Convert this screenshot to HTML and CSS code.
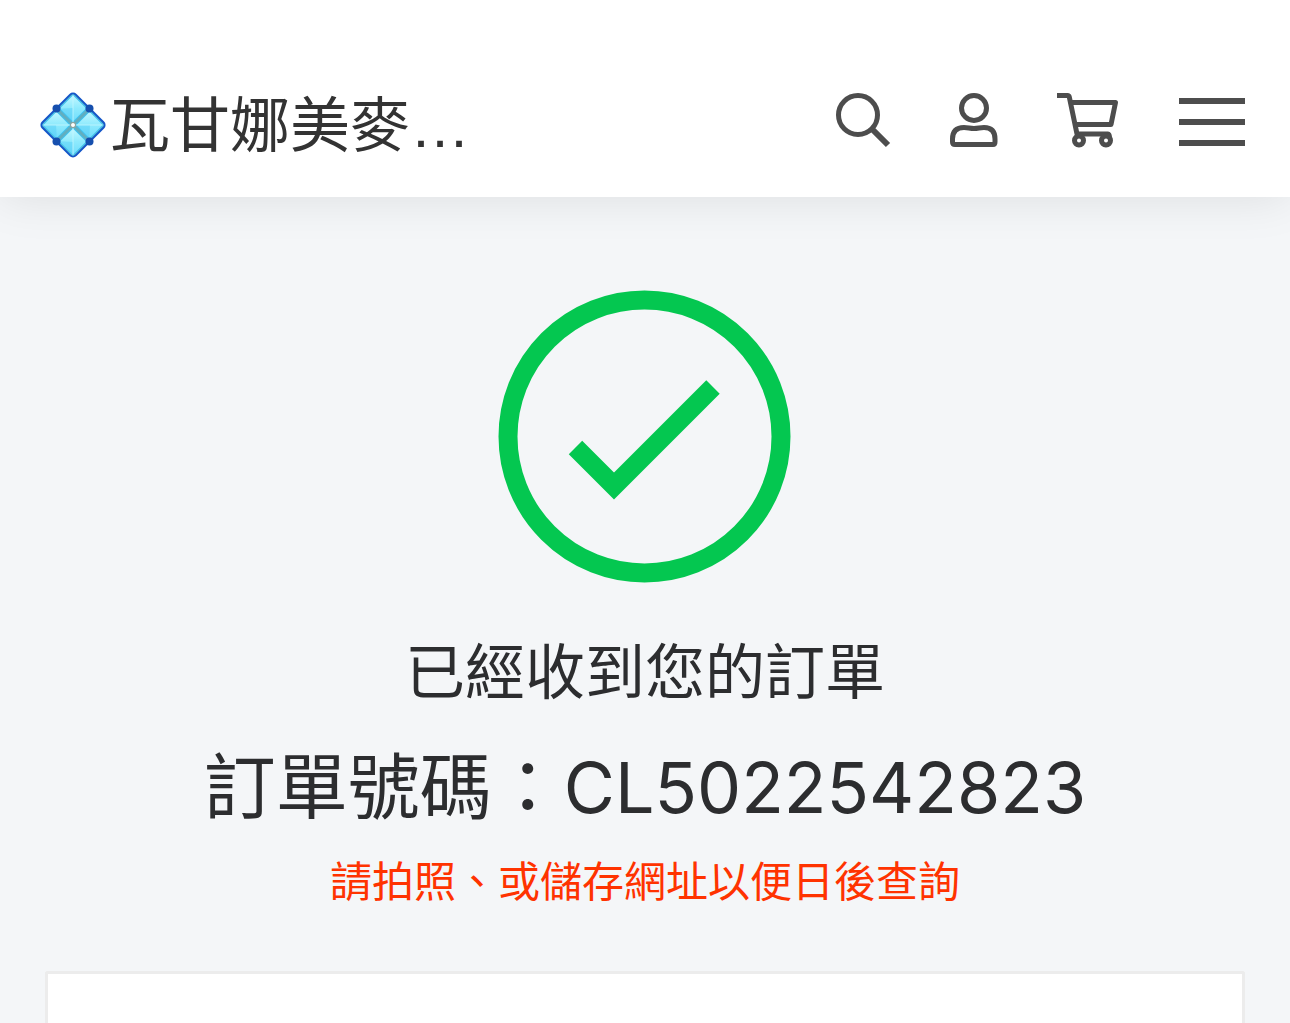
FILE: index.html
```html
<!DOCTYPE html>
<html lang="zh-Hant">
<head>
<meta charset="utf-8">
<meta name="viewport" content="width=device-width, initial-scale=1">
<title>已經收到您的訂單</title>
<link rel="stylesheet" href="styles.css">
</head>
<body>
<header class="navbar">
    <a class="brand" href="#">
        <svg class="brand-icon" viewBox="0 0 66 66" aria-hidden="true">
            <defs>
                <linearGradient id="pane" x1="0" y1="0" x2="1" y2="1">
                    <stop offset="0" stop-color="#c4f8ff"/>
                    <stop offset=".5" stop-color="#8eeafd"/>
                    <stop offset="1" stop-color="#6edcfb"/>
                </linearGradient>
            </defs>
            <g transform="rotate(45 33 33)">
                <rect x="9.500" y="9.500" width="47" height="47" rx="4" fill="#62aebf" stroke="#1557c9" stroke-width="2"/>
                <g fill="url(#pane)" stroke="#3fc3f1" stroke-width="1">
                    <rect x="11.500" y="11.500" width="19.500" height="19.500" rx="1"/>
                    <rect x="35" y="11.500" width="19.500" height="19.500" rx="1"/>
                    <rect x="11.500" y="35" width="19.500" height="19.500" rx="1"/>
                    <rect x="35" y="35" width="19.500" height="19.500" rx="1"/>
                </g>
                <g fill="#4cc9f5" opacity=".4">
                    <path d="M12 31 21 21 31 31ZM35 31 45 21 54 31ZM12 54 21 45 31 54ZM35 54 45 45 54 54Z"/>
                </g>
                <g stroke="#c6f7ff" stroke-width="1" opacity=".8">
                    <path d="M12 12 31 31M54 12 35 31M12 54 31 35M54 54 35 35"/>
                </g>
            </g>
            <g fill="#164fae">
                <circle cx="16.500" cy="16.500" r="4"/>
                <circle cx="49.500" cy="16.500" r="4"/>
                <circle cx="16.500" cy="49.500" r="4"/>
                <circle cx="49.500" cy="49.500" r="4"/>
            </g>
            <circle cx="33" cy="33" r="2.500" fill="#fff" stroke="#8a9a90" stroke-width="1"/>
        </svg>
        <span class="brand-name">瓦甘娜美麥<span class="dots">…</span></span>
    </a>
    <nav class="tools">
        <button class="tool" type="button" aria-label="搜尋">
            <svg width="54" height="54" viewBox="0 0 54 54">
                <circle cx="22" cy="22" r="19.500"/>
                <path d="M37 37 52 52" stroke-width="6"/>
            </svg>
        </button>
        <a class="tool" href="#" aria-label="會員">
            <svg width="48" height="54" viewBox="0 0 48 54">
                <circle cx="24" cy="15" r="12.500"/>
                <path d="M5 51.500H43Q45 51.500 45 49V46Q45 34.500 34 34.500C30 34.500 28 35.500 24 35.500S18 34.500 14 34.500Q2.500 34.500 2.500 46V49Q2.500 51.500 5 51.500Z"/>
            </svg>
        </a>
        <a class="tool" href="#" aria-label="購物車">
            <svg width="61" height="54" viewBox="0 0 61 54">
                <path d="M-1 2.500H9.500Q11 2.500 11.300 4L19 41H50Q51.500 41 51.500 45"/>
                <path d="M13 9.500H57.500L53 31.500H17"/>
                <circle cx="21" cy="47.500" r="4.500"/>
                <circle cx="48" cy="47.500" r="4.500"/>
            </svg>
        </a>
        <button class="tool" type="button" aria-label="選單">
            <svg width="66" height="54" viewBox="0 0 66 54">
                <path d="M0 8H66M0 29H66M0 50H66" stroke-width="6"/>
            </svg>
        </button>
    </nav>
</header>
<main>
    <svg class="done" viewBox="0 0 294 294" aria-hidden="true">
        <circle cx="146.500" cy="146.500" r="136.500"/>
        <path d="M77.500 157.500 116 196 215 97"/>
    </svg>
    <h1>已經收到您的訂單</h1>
    <p class="order">訂單號碼：<span class="order-no">CL5022542823</span></p>
    <p class="note">請拍照、或儲存網址以便日後查詢</p>
    <section class="card"></section>
</main>
</body>
</html>
```
FILE: styles.css
```css
* {
    box-sizing: border-box;
}

body {
    margin: 0;
    min-height: 100vh;
    display: flex;
    flex-direction: column;
    font-family: "Noto Sans CJK TC", sans-serif;
    background: #f4f6f8;
    color: #2c2d2f;
}

.navbar {
    display: flex;
    align-items: flex-start;
    justify-content: space-between;
    padding: 76px 45px 31px 40px;
    background: #fff;
    box-shadow: 0 0 45px rgba(0, 0, 0, 0.1);
}

.brand {
    display: flex;
    align-items: flex-start;
    gap: 4px;
    color: #333;
    text-decoration: none;
}

.brand-icon {
    width: 66px;
    height: 66px;
    margin-top: 16px;
}

.brand-name {
    font-size: 60px;
    line-height: 90px;
    white-space: nowrap;
}

.dots {
    font-family: "Liberation Sans", sans-serif;
    line-height: 1;
}

.tools {
    display: flex;
    gap: 60px;
    padding-top: 17px;
}

.tool {
    display: block;
    padding: 0;
    border: none;
    background: none;
    cursor: pointer;
}

.tool svg {
    display: block;
    overflow: visible;
    fill: none;
    stroke: #4d4d4d;
    stroke-width: 5;
    stroke-linejoin: round;
}

main {
    flex: 1;
    display: flex;
    flex-direction: column;
    align-items: center;
    padding: 93px 45px 0;
    text-align: center;
}

.done {
    width: 294px;
    height: 294px;
    fill: none;
    stroke: #04c750;
    stroke-width: 19;
}

h1 {
    margin: 39px 0 0;
    font-size: 60px;
    font-weight: 400;
    line-height: 90px;
}

.order {
    margin: 15px 0 0;
    font-size: 72px;
    line-height: 108px;
}

.order-no {
    font-family: Inter, sans-serif;
    font-size: 70px;
    line-height: 1;
}

.note {
    margin: 11px 0 0;
    font-size: 42px;
    line-height: 64px;
    color: #ff3300;
}

.card {
    flex: 1;
    align-self: stretch;
    min-height: 52px;
    margin-top: 60px;
    background: #fff;
    border: 3px solid #ececec;
    border-bottom: none;
    border-radius: 3px 3px 0 0;
}
```
